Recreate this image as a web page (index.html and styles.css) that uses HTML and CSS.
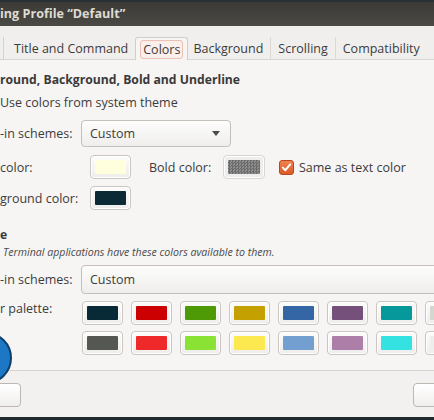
FILE: index.html
```html
<!DOCTYPE html>
<html>
<head>
<meta charset="utf-8">
<link rel="stylesheet" href="styles.css">
</head>
<body>
<div class="window">
  <div class="titlebar">ing Profile “Default”</div>
  <div class="tabs">
    <div class="tab stub"></div>
    <div class="tab">Title and Command</div>
    <div class="tab active"><span class="focus">Colors</span></div>
    <div class="tab">Background</div>
    <div class="tab">Scrolling</div>
    <div class="tab">Compatibility</div>
  </div>
  <div class="page">
    <div class="heading">round, Background, Bold and Underline</div>
    <div class="line">Use colors from system theme</div>
    <div class="row r-scheme">
      <span class="label w81">-in schemes:</span>
      <div class="combo small"><span>Custom</span><span class="arrow"></span></div>
    </div>
    <div class="row r-color">
      <span class="label w90">color:</span>
      <div class="cbtn"><div class="sw" style="background:#ffffdd"></div></div>
      <span class="label bold-label">Bold color:</span>
      <div class="cbtn off"><div class="sw checker"></div></div>
      <span class="check"><svg width="11" height="11" viewBox="0 0 11 11"><path d="M1.8 5.6 L4.4 8.2 L9.2 2.4" fill="none" stroke="#fff" stroke-width="2" stroke-linecap="round" stroke-linejoin="round"/></svg></span>
      <span class="label">Same as text color</span>
    </div>
    <div class="row r-color2">
      <span class="label w90">ground color:</span>
      <div class="cbtn"><div class="sw" style="background:#0b2a35"></div></div>
    </div>
    <div class="heading h2">e</div>
    <div class="note">Terminal applications have these colors available to them.</div>
    <div class="row r-scheme2">
      <span class="label w81">-in schemes:</span>
      <div class="combo wide"><span>Custom</span></div>
    </div>
    <div class="row r-palette">
      <span class="label w82">r palette:</span>
      <div class="palette">
        <div class="pbtn"><div class="sw" style="background:#082a36"></div></div>
        <div class="pbtn"><div class="sw" style="background:#cc0000"></div></div>
        <div class="pbtn"><div class="sw" style="background:#4e9a06"></div></div>
        <div class="pbtn"><div class="sw" style="background:#c4a000"></div></div>
        <div class="pbtn"><div class="sw" style="background:#3465a4"></div></div>
        <div class="pbtn"><div class="sw" style="background:#75507b"></div></div>
        <div class="pbtn"><div class="sw" style="background:#06989a"></div></div>
        <div class="pbtn"><div class="sw" style="background:#d3d7cf"></div></div>
        <div class="pbtn"><div class="sw" style="background:#555753"></div></div>
        <div class="pbtn"><div class="sw" style="background:#ef2929"></div></div>
        <div class="pbtn"><div class="sw" style="background:#8ae234"></div></div>
        <div class="pbtn"><div class="sw" style="background:#fce94f"></div></div>
        <div class="pbtn"><div class="sw" style="background:#729fcf"></div></div>
        <div class="pbtn"><div class="sw" style="background:#ad7fa8"></div></div>
        <div class="pbtn"><div class="sw" style="background:#34e2e2"></div></div>
        <div class="pbtn"><div class="sw" style="background:#eeeeec"></div></div>
      </div>
    </div>
    <div class="bubble"></div>
  </div>
  <div class="actions">
    <div class="btn left"></div>
    <div class="btn right"></div>
  </div>
  <div class="bottom"></div>
</div>
</body>
</html>
```
FILE: styles.css
```css
html, body {
  margin: 0;
  padding: 0;
  background: #f2f1f0;
}
body {
  width: 434px;
  height: 420px;
  overflow: hidden;
  font-family: "Open Sans", "Noto Sans", sans-serif;
  font-size: 12.5px;
  color: #3c3c3c;
}
.window {
  width: 434px;
  height: 420px;
  display: flex;
  flex-direction: column;
  overflow: hidden;
}
.titlebar {
  flex: none;
  height: 24px;
  border-top: 2px solid #2a3134;
  background: linear-gradient(#3b3a36, #4a4944);
  color: #dfdbd2;
  font-weight: 700;
  font-size: 12.6px;
  line-height: 24px;
  white-space: nowrap;
}
.tabs {
  flex: none;
  height: 33px;
  display: flex;
  align-items: flex-end;
  background: #f0efee;
  border-bottom: 1px solid #d9d5d0;
  white-space: nowrap;
  font-size: 12.5px;
}
.tab {
  height: 22px;
  line-height: 23px;
  padding: 0 7px 0 7px;
  border-left: 1px solid #dcd8d3;
  color: #3c3c3c;
}
.tab.stub {
  width: 3px;
  padding: 0;
  border-left: none;
  border-right: 1px solid #d6d2cd;
}
.tab.stub + .tab { border-left: none; padding-left: 10px; padding-right: 7px; }
.tab.active {
  height: 23px;
  margin-bottom: -1px;
  padding: 1px 4px 0;
  box-sizing: border-box;
  background: #f6f5f4;
  border: 1px solid #d2cdc8;
  border-bottom: none;
  border-radius: 3px 3px 0 0;
  display: flex;
  align-items: center;
}
.tab.active + .tab { border-left: none; padding-left: 5px; }
.focus {
  display: inline-block;
  line-height: 17px;
  padding: 0 2px;
  border: 1px solid #ecc1b3;
  border-radius: 3px;
  background: #fbefeb;
}
.page {
  position: relative;
  flex: 1;
  background: #f6f5f4;
  padding-top: 11px;
  border-bottom: 1px solid #d8d4cf;
  white-space: nowrap;
}
.heading {
  font-weight: 700;
  font-size: 12.2px;
  line-height: 18px;
  height: 18px;
  color: #3a3a3a;
}
.heading.h2 { margin-top: 16px; }
.line {
  line-height: 18px;
  height: 18px;
  margin-top: 5px;
}
.note {
  height: 15px;
  margin-top: 1px;
  margin-left: 3px;
  font-style: italic;
  font-size: 10.6px;
  line-height: 15px;
  color: #4a4a4a;
}
.row {
  display: flex;
  align-items: center;
}
.label { flex: none; }
.w81 { width: 81px; }
.w82 { width: 82px; }
.w90 { width: 90px; }
.r-scheme { margin-top: 8px; }
.r-color { margin-top: 8px; }
.r-color2 { margin-top: 7px; }
.r-scheme2 { margin-top: 5px; }
.r-palette { margin-top: 7px; align-items: flex-start; }
.r-palette .label { margin-top: -1px; }
.combo {
  box-sizing: border-box;
  height: 27px;
  border: 1px solid #c4bfb9;
  border-radius: 4px;
  background: linear-gradient(#fdfdfc, #efeeec);
  display: flex;
  align-items: center;
  justify-content: space-between;
  padding: 0 10px 0 8px;
  color: #3c3c3c;
  flex: none;
}
.combo.small { width: 150px; }
.combo.wide { width: 380px; height: 29px; }
.arrow {
  width: 0;
  height: 0;
  border-left: 4px solid transparent;
  border-right: 4px solid transparent;
  border-top: 5px solid #4a4a4a;
}
.cbtn, .pbtn {
  box-sizing: border-box;
  flex: none;
  width: 41px;
  height: 24px;
  padding: 4px;
  border: 1px solid #cbc6c1;
  border-radius: 4px;
  background: linear-gradient(#fcfcfb, #eeedeb);
  box-shadow: inset 0 0 0 1px #fff;
}
.cbtn.off {
  width: 42px;
  border-color: #dad6d2;
  background: #eeedeb;
}
.sw {
  width: 100%;
  height: 100%;
  border-radius: 1px;
}
.checker {
  background: repeating-conic-gradient(#6b6b6b 0 25%, #8e8e8e 0 50%) 0 0 / 3px 3px;
}
.bold-label { margin-left: 18px; width: 74px; }
.check {
  box-sizing: border-box;
  flex: none;
  width: 15px;
  height: 15px;
  margin-left: 14px;
  margin-right: 5px;
  border: 1px solid #b9461c;
  border-radius: 3px;
  background: linear-gradient(#f08150, #da5a26);
  display: flex;
  align-items: center;
  justify-content: center;
}
.palette {
  display: grid;
  grid-template-columns: repeat(8, 41px);
  column-gap: 8px;
  row-gap: 6px;
}
.bubble {
  position: absolute;
  left: -40px;
  top: 272px;
  width: 48px;
  height: 48px;
  border-radius: 50%;
  background: #1c78c4;
  border: 2px solid #0f3f6a;
}
.actions {
  flex: none;
  height: 46px;
  display: flex;
  justify-content: space-between;
  align-items: flex-start;
  padding-top: 12px;
  box-sizing: border-box;
  background: #f2f1f0;
}
.btn {
  box-sizing: border-box;
  height: 24px;
  border: 1px solid #bcb7b0;
  border-radius: 4px;
  background: linear-gradient(#ffffff, #f0efed);
}
.btn.left { width: 26px; margin-left: -5px; }
.btn.right { width: 30px; margin-right: -9px; }
.bottom {
  flex: none;
  height: 3px;
  background: #1f2a2e;
}
```
